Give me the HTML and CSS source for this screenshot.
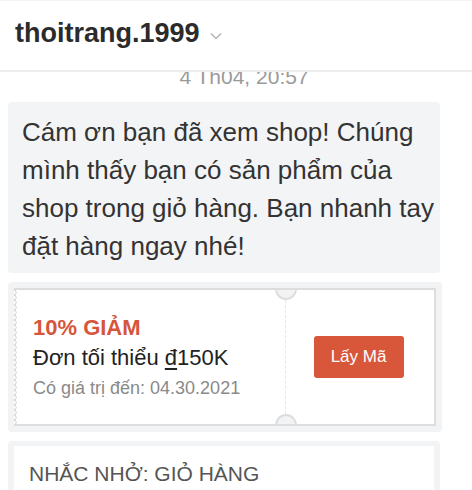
FILE: index.html
```html
<!DOCTYPE html>
<html lang="vi">
<head>
    <meta charset="UTF-8">
    <meta name="viewport" content="width=device-width, initial-scale=1.0">
    <title>thoitrang.1999</title>
    <link rel="stylesheet" href="styles.css">
</head>
<body>
    <header class="chat-header">
        <span class="shop-name">thoitrang.1999</span>
        <svg class="chevron" width="12" height="8" viewBox="0 0 12 8">
            <path d="M1 1.5 L6 6.5 L11 1.5" fill="none" stroke="#b3b3b3" stroke-width="1.5"/>
        </svg>
    </header>
    <main class="thread">
        <div class="timestamp">4 Th04, 20:57</div>
        <div class="bubble">Cám ơn bạn đã xem shop! Chúng mình thấy bạn có sản phẩm của shop trong giỏ hàng. Bạn nhanh tay đặt hàng ngay nhé!</div>
        <div class="voucher">
            <div class="ticket">
                <div class="ticket-info">
                    <div class="discount">10% GIẢM</div>
                    <div class="min-order">Đơn tối thiểu <span class="currency">đ</span>150K</div>
                    <div class="expiry">Có giá trị đến: 04.30.2021</div>
                </div>
                <div class="ticket-action">
                    <button class="get-code">Lấy Mã</button>
                </div>
            </div>
        </div>
        <div class="reminder">
            <div class="reminder-body">
                <div class="reminder-title">NHẮC NHỞ: GIỎ HÀNG</div>
            </div>
        </div>
    </main>
</body>
</html>
```

FILE: styles.css
```css
body {
    margin: 0;
    height: 490px;
    overflow: hidden;
    background: #ffffff;
    font-family: 'Liberation Sans', Arial, Helvetica, sans-serif;
    color: #333333;
}
.chat-header {
    display: flex;
    align-items: center;
    height: 72px;
    box-sizing: border-box;
    padding: 0 0 4px 15px;
    border-top: 1px solid #f3f3f3;
    border-bottom: 2px solid #ededed;
    background: #ffffff;
}
.shop-name {
    font-size: 27px;
    font-weight: bold;
    color: #2b2b2b;
}
.chevron {
    margin: 4px 0 0 10px;
}
.thread {
    height: 418px;
    overflow: hidden;
}
.timestamp {
    margin: -7px 0 13px;
    padding-left: 16px;
    text-align: center;
    font-size: 21px;
    color: #9a9a9a;
}
.bubble {
    width: 432px;
    box-sizing: border-box;
    margin-left: 8px;
    padding: 11px 6px 8px 14px;
    background: #f3f4f6;
    border-radius: 4px;
    font-size: 26px;
    line-height: 38px;
    color: #333333;
}
.voucher {
    width: 434px;
    box-sizing: border-box;
    margin: 9px 0 0 8px;
    padding: 6px;
    background: #f2f3f5;
    border-radius: 4px;
}
.ticket {
    position: relative;
    display: flex;
    height: 138px;
    box-sizing: border-box;
    border: 2px solid #dddddd;
    border-left: none;
    background: #ffffff;
    overflow: hidden;
}
/* stamp-like scalloped left edge */
.ticket::before {
    content: '';
    position: absolute;
    left: 0;
    top: 0;
    bottom: 0;
    width: 3px;
    background: radial-gradient(circle at 0 50%, #ffffff 1.4px, #d6d6d6 1.9px, #d6d6d6 2.4px, transparent 2.9px);
    background-size: 3px 5px;
}
.ticket-info {
    flex: 0 0 252px;
    display: flex;
    flex-direction: column;
    justify-content: center;
    padding-left: 19px;
}
.discount {
    font-size: 22px;
    line-height: 30px;
    font-weight: bold;
    color: #d5563b;
}
.min-order {
    font-size: 22px;
    line-height: 30px;
    color: #222222;
}
.currency {
    text-decoration: underline;
    text-decoration-thickness: 1.5px;
    text-underline-offset: 3px;
}
.expiry {
    margin-top: 2px;
    font-size: 18px;
    line-height: 26px;
    color: #8a8a8a;
}
.ticket-action {
    position: relative;
    flex: 1;
    display: flex;
    align-items: center;
    justify-content: center;
    padding-right: 3px;
    border-left: 1px dashed #e6e6e6;
}
.ticket-action::before,
.ticket-action::after {
    content: '';
    position: absolute;
    left: -11px;
    width: 18px;
    height: 18px;
    border: 2px solid #dddddd;
    border-radius: 50%;
    background: #f2f3f5;
}
.ticket-action::before {
    top: -12px;
}
.ticket-action::after {
    bottom: -12px;
}
.get-code {
    width: 90px;
    height: 42px;
    border: none;
    border-radius: 3px;
    background: #d8573b;
    color: #ffffff;
    font-family: inherit;
    font-size: 17px;
    cursor: pointer;
}
.reminder {
    width: 432px;
    box-sizing: border-box;
    margin: 9px 0 0 8px;
    padding: 5px 6px 0;
    background: #f2f3f5;
    border-radius: 4px;
}
.reminder-body {
    padding: 16px 15px 30px;
    background: #ffffff;
}
.reminder-title {
    font-size: 21px;
    color: #555555;
}
```
